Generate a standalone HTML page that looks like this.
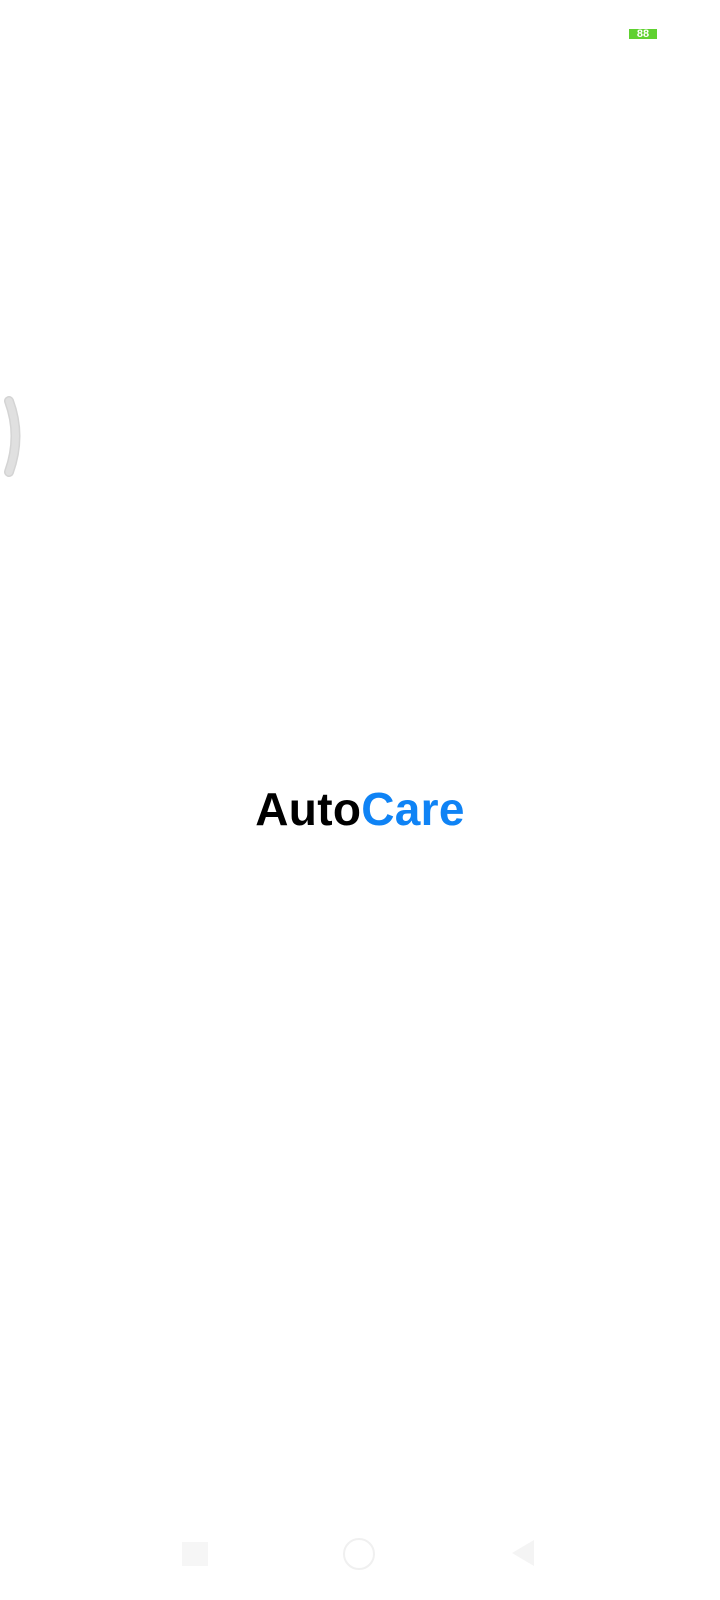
<!DOCTYPE html>
<html><head><meta charset="utf-8"><style>
html,body{margin:0;padding:0;width:720px;height:1600px;background:#fff;overflow:hidden;position:relative;font-family:"Liberation Sans",sans-serif}
.bat{position:absolute;left:629px;top:29px;width:28px;height:10px;background:#5fd130;color:#fff;font-size:11px;font-weight:bold;line-height:10px;text-align:center}
.title{position:absolute;left:0;width:720px;top:781px;text-align:center;font-size:46px;font-weight:bold;line-height:56px;letter-spacing:0.3px}
.title span{color:#0f83f5}
</style></head><body>
<div class="bat">88</div>
<svg style="position:absolute;left:0;top:396px" width="30" height="84"><path d="M9 5 Q22 40 9 76" stroke="#d4d4d4" stroke-width="10" fill="none" stroke-linecap="round"/><path d="M9 5 Q22 40 9 76" stroke="#e0e0e0" stroke-width="7" fill="none" stroke-linecap="round"/></svg>
<div class="title">Auto<span>Care</span></div>
<div style="position:absolute;left:182px;top:1542px;width:26px;height:24px;background:#f6f6f6"></div>
<div style="position:absolute;left:343px;top:1538px;width:32px;height:32px;border:2px solid #f0f0f0;border-radius:50%;box-sizing:border-box"></div>
<svg style="position:absolute;left:508px;top:1538px" width="30" height="30"><path d="M26 2 L26 28 L4 15 Z" fill="#f4f4f4"/></svg>
</body></html>
